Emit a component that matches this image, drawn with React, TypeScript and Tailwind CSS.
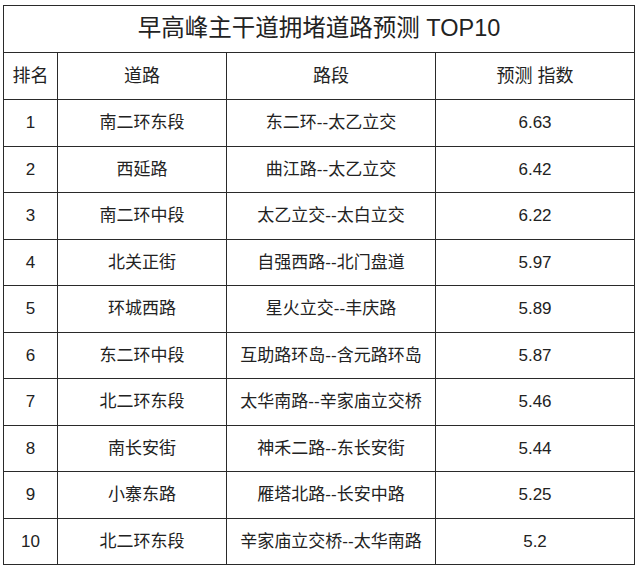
import React from "react";

type Row = { rank: number; road: string; section: string; index: string };

const rows: Row[] = [
  { rank: 1, road: "南二环东段", section: "东二环--太乙立交", index: "6.63" },
  { rank: 2, road: "西延路", section: "曲江路--太乙立交", index: "6.42" },
  { rank: 3, road: "南二环中段", section: "太乙立交--太白立交", index: "6.22" },
  { rank: 4, road: "北关正街", section: "自强西路--北门盘道", index: "5.97" },
  { rank: 5, road: "环城西路", section: "星火立交--丰庆路", index: "5.89" },
  { rank: 6, road: "东二环中段", section: "互助路环岛--含元路环岛", index: "5.87" },
  { rank: 7, road: "北二环东段", section: "太华南路--辛家庙立交桥", index: "5.46" },
  { rank: 8, road: "南长安街", section: "神禾二路--东长安街", index: "5.44" },
  { rank: 9, road: "小寨东路", section: "雁塔北路--长安中路", index: "5.25" },
  { rank: 10, road: "北二环东段", section: "辛家庙立交桥--太华南路", index: "5.2" },
];

const cell = "border-[1.5px] border-[#2a2a2a] text-center align-middle";

export default function App() {
  return (
    <div
      className="w-[640px] h-[569px] bg-white pt-[5px] pl-[3px] text-[#222]"
      style={{ fontFamily: '"Liberation Sans", "Noto Sans CJK SC", sans-serif' }}
    >
      <table className="w-[631px] border-collapse table-fixed">
        <colgroup>
          <col className="w-[54px]" />
          <col className="w-[169px]" />
          <col className="w-[209px]" />
          <col className="w-[199px]" />
        </colgroup>
        <thead>
          <tr className="h-[47px]">
            <th colSpan={4} className={`${cell} text-[23.5px] font-normal`}>
              早高峰主干道拥堵道路预测 TOP10
            </th>
          </tr>
          <tr className="h-[47px]">
            <th className={`${cell} text-[18px] font-normal`}>排名</th>
            <th className={`${cell} text-[18px] font-normal`}>道路</th>
            <th className={`${cell} text-[18px] font-normal`}>路段</th>
            <th className={`${cell} text-[18px] font-normal`}>预测 指数</th>
          </tr>
        </thead>
        <tbody>
          {rows.map((r) => (
            <tr key={r.rank} className="h-[46.5px] text-[17px]">
              <td className={cell}>{r.rank}</td>
              <td className={cell}>{r.road}</td>
              <td className={cell}>{r.section}</td>
              <td className={cell}>{r.index}</td>
            </tr>
          ))}
        </tbody>
      </table>
    </div>
  );
}
